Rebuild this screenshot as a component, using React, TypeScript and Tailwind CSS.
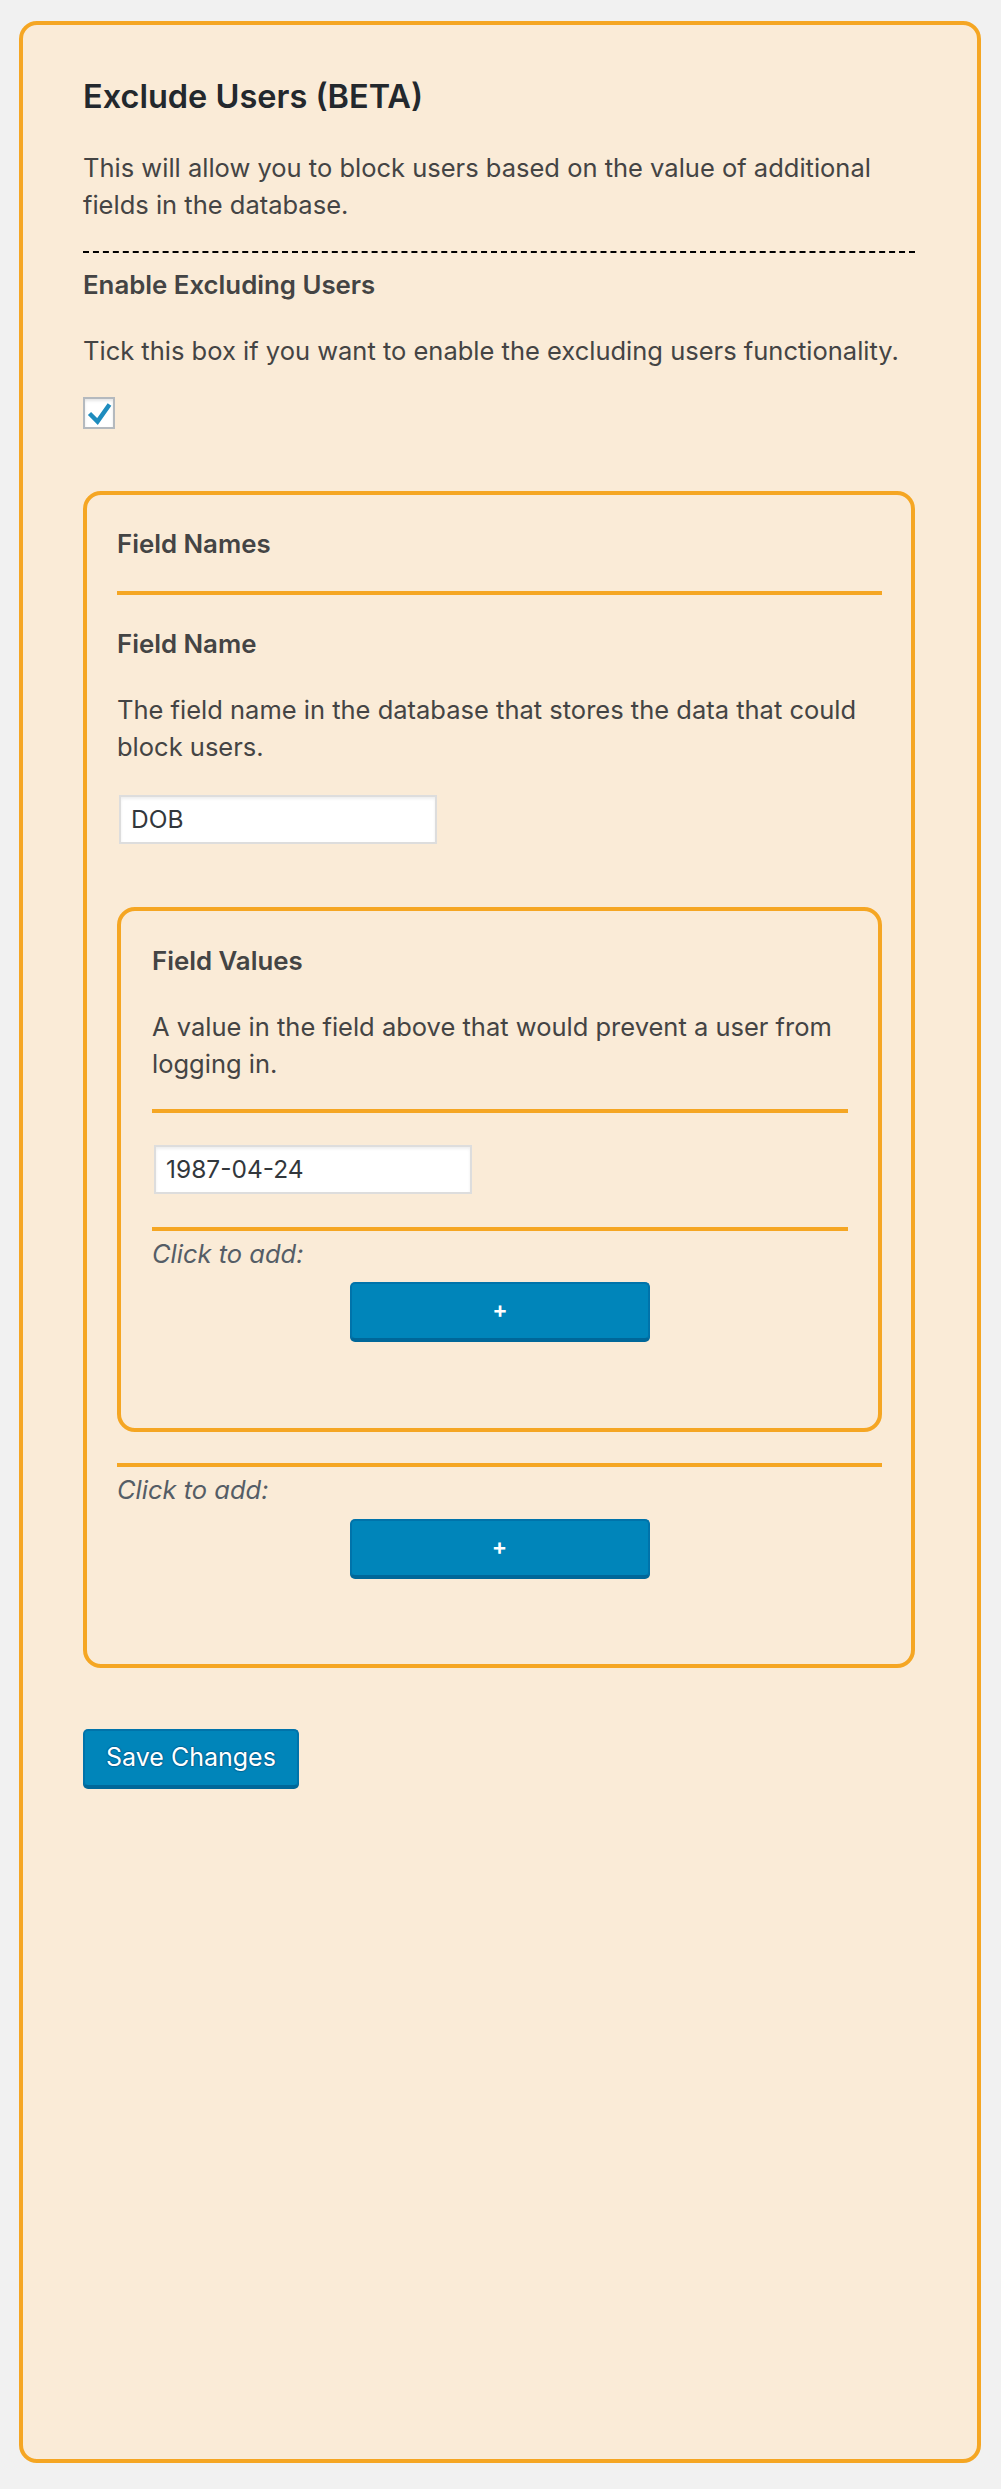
import React from "react";

const orange = "#f5a623";

function Label({ children }: { children: React.ReactNode }) {
  return <h3 className="text-[25.8px] leading-[37px] font-semibold text-[#444]">{children}</h3>;
}

function Desc({ children, className = "" }: { children: React.ReactNode; className?: string }) {
  return <p className={`text-[25.5px] leading-[37px] text-[#444] ${className}`}>{children}</p>;
}

function TextInput({ value, className = "" }: { value: string; className?: string }) {
  return (
    <div
      className={`ml-[2px] w-[318px] h-[49px] bg-white border-2 border-[#ddd] shadow-[inset_0_2px_3px_rgba(0,0,0,0.07)] flex items-center px-[10px] text-[24.5px] text-[#32373c] ${className}`}
    >
      {value}
    </div>
  );
}

function AddButton({ className = "" }: { className?: string }) {
  return (
    <button
      type="button"
      className={`mx-auto block w-[300px] h-[58px] rounded-[5px] bg-[#0085ba] border-2 border-[#0073aa] border-b-[#006799] shadow-[0_2px_0_#006799] text-white text-[23px] font-semibold leading-none ${className}`}
    >
      +
    </button>
  );
}

function OrangeRule({ className = "" }: { className?: string }) {
  return <div className={`h-[4px] bg-[#f5a623] ${className}`} />;
}

function ClickToAdd({ className = "" }: { className?: string }) {
  return <p className={`text-[25.5px] leading-[37px] italic text-[#555d66] ${className}`}>Click to add:</p>;
}

export default function App() {
  return (
    <div className="min-h-[2489px] bg-[#f1f1f1] pt-[21px] pb-[26px] pl-[19px] pr-[20px] font-['Inter',sans-serif]">
      <div
        className="h-[2442px] rounded-[18px] border-4 bg-[#faebd7] pt-[52px] pl-[60px] pr-[62px]"
        style={{ borderColor: orange }}
      >
        <h2 className="text-[32.5px] leading-[39.6px] font-semibold text-[#23282d]">Exclude Users (BETA)</h2>
        <Desc className="mt-[32px]">
          This will allow you to block users based on the value of additional fields in the database.
        </Desc>

        <div className="mt-[28px] border-t-2 border-dashed border-black" />

        <div className="mt-[13px]">
          <Label>Enable Excluding Users</Label>
        </div>
        <Desc className="mt-[29px]">Tick this box if you want to enable the excluding users functionality.</Desc>

        <div className="mt-[28px] w-[32px] h-[32px] bg-white border-2 border-[#b4b9be] shadow-[inset_0_2px_3px_rgba(0,0,0,0.1)]">
          <svg viewBox="0 0 28 28" className="w-full h-full">
            <polyline
              points="4.5,14.5 12.5,22.5 24.5,5.5"
              fill="none"
              stroke="#1e8cbe"
              strokeWidth="4.5"
              strokeLinejoin="miter"
            />
          </svg>
        </div>

        {/* field names group */}
        <div className="mt-[62px] rounded-[18px] border-4 border-[#f5a623] pt-[30px] pl-[30px] pr-[29px] pb-[87px]">
          <Label>Field Names</Label>
          <OrangeRule className="mt-[29px]" />
          <div className="mt-[30px]">
            <Label>Field Name</Label>
          </div>
          <Desc className="mt-[29px]">The field name in the database that stores the data that could block users.</Desc>
          <TextInput value="DOB" className="mt-[30px]" />

          {/* field values group */}
          <div className="mt-[63px] rounded-[18px] border-4 border-[#f5a623] pt-[31px] pl-[31px] pr-[30px] pb-[88px]">
            <Label>Field Values</Label>
            <Desc className="mt-[29px]">A value in the field above that would prevent a user from logging in.</Desc>
            <OrangeRule className="mt-[27px]" />
            <TextInput value="1987-04-24" className="mt-[32px]" />
            <OrangeRule className="mt-[33px]" />
            <ClickToAdd className="mt-[4px]" />
            <AddButton className="mt-[10px]" />
          </div>

          <OrangeRule className="mt-[31px]" />
          <ClickToAdd className="mt-[4px]" />
          <AddButton className="mt-[11px]" />
        </div>

        <button
          type="button"
          className="mt-[61px] h-[58px] px-[21px] rounded-[5px] bg-[#0085ba] border-2 border-[#0073aa] border-b-[#006799] shadow-[0_2px_0_#006799] text-white text-[25px] leading-none [text-shadow:0_-1px_1px_#006799,1px_0_1px_#006799,0_1px_1px_#006799,-1px_0_1px_#006799]"
        >
          Save Changes
        </button>
      </div>
    </div>
  );
}
